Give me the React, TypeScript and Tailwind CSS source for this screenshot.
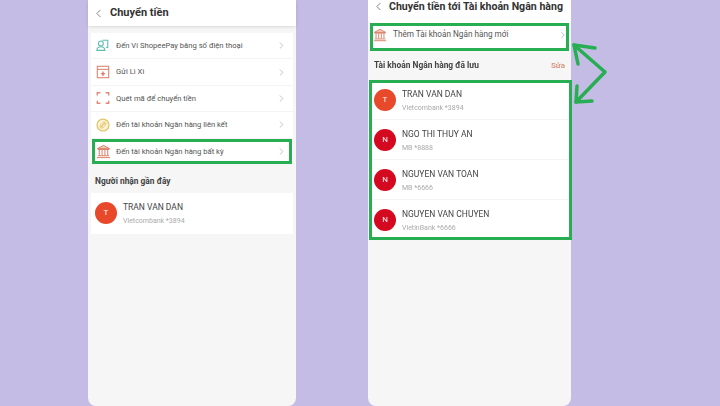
import React from "react";
import { ChevronLeft, ChevronRight } from "lucide-react";

const BankIcon = ({ className }: { className?: string }) => (
  <svg viewBox="0 0 16 16" className={className} fill="none" stroke="#d9775f" strokeWidth="1">
    <path d="M1.500 5 8 1.500 14.500 5z" fill="#f3c9bb" />
    <path d="M2 5.800h12M3.500 6v6M6.500 6v6M9.500 6v6M12.500 6v6M2 12.500h12M1 14.500h14" />
  </svg>
);

const PhoneUserIcon = () => (
  <svg viewBox="0 0 16 16" className="h-[13px] w-[13px]" fill="none" stroke="#5dbcae" strokeWidth="1.300">
    <circle cx="6" cy="5.500" r="3" />
    <path d="M1 14c.3-3 2-4.500 5-4.500s4.700 1.500 5 4.500z" />
    <path d="M8 1.500h6.500v9h-2" />
  </svg>
);

const EnvelopeIcon = () => (
  <svg viewBox="0 0 16 16" className="h-[14px] w-[14px]" fill="none" stroke="#df8a76" strokeWidth="1.300">
    <rect x="1.500" y="1.500" width="13" height="13" />
    <path d="M1.500 5h13" />
    <path d="M8 7.500v5M5.500 10h5" stroke="#d9664f" />
  </svg>
);

const ScanIcon = () => (
  <svg viewBox="0 0 16 16" className="h-[14px] w-[14px]" fill="none" stroke="#df8a76" strokeWidth="1.600">
    <path d="M1.500 5V2h3.500M11 2h3.500v3M1.500 11v3h3.500M11 14h3.500v-3" />
  </svg>
);

const LinkIcon = () => (
  <svg viewBox="0 0 16 16" className="h-[14px] w-[14px]" fill="#fbf3d6" stroke="#e3c56c" strokeWidth="1.500">
    <circle cx="8" cy="8" r="6.800" />
    <path d="m5.500 10.500 5-5" />
    <path d="M6.500 6 8 5a1.800 1.800 0 0 1 2.800 2.800L10 9.500M9.500 10 8 11a1.800 1.800 0 0 1-2.800-2.800L6 6.500" fill="none" strokeWidth="1" />
  </svg>
);

const menuItems = [
  { label: "Đến Ví ShopeePay bằng số điện thoại", icon: <PhoneUserIcon /> },
  { label: "Gửi Lì Xì", icon: <EnvelopeIcon /> },
  { label: "Quét mã để chuyển tiền", icon: <ScanIcon /> },
  { label: "Đến tài khoản Ngân hàng liên kết", icon: <LinkIcon /> },
  { label: "Đến tài khoản Ngân hàng bất kỳ", icon: <BankIcon className="h-[15px] w-[15px]" /> },
];

const accounts = [
  { letter: "T", name: "TRAN VAN DAN", bank: "Vietcombank *3894", red: false },
  { letter: "N", name: "NGO THI THUY AN", bank: "MB *8888", red: true },
  { letter: "N", name: "NGUYEN VAN TOAN", bank: "MB *6666", red: true },
  { letter: "N", name: "NGUYEN VAN CHUYEN", bank: "VietinBank *6666", red: true },
];

const Avatar = ({ letter, red }: { letter: string; red: boolean }) => (
  <div
    className={`flex h-[22px] w-[22px] shrink-0 items-center justify-center rounded-full text-[8px] font-normal text-white ${
      red ? "bg-[#d4081f]" : "bg-[#e8492a]"
    }`}
  >
    {letter}
  </div>
);

const AccountInfo = ({ name, bank }: { name: string; bank: string }) => (
  <div className="flex flex-col gap-[5px] pt-[2px]">
    <span className="text-[8.500px] leading-[10px] text-[#444]">{name}</span>
    <span className="text-[7px] leading-[9px] text-[#aaa]">{bank}</span>
  </div>
);

const LeftPhone = () => (
  <div className="relative h-[406px] w-[208px] shrink-0 rounded-b-lg bg-[#f6f6f6]">
    <div className="flex h-[26px] items-center gap-[5px] bg-white pl-[4px] shadow-[0_1px_3px_rgba(0,0,0,0.12)]">
      <ChevronLeft className="h-[13px] w-[13px] text-[#666]" strokeWidth={1.500} />
      <span className="text-[11px] font-bold text-[#333]">Chuyển tiền</span>
    </div>
    <div className="mx-[3px] mt-[7px] flex flex-col bg-white">
      {menuItems.map((item) => (
        <div key={item.label} className="flex h-[26.400px] items-center border-b border-[#f4f4f4] pl-[5px] pr-[6px]">
          <div className="flex w-[20px] items-center">{item.icon}</div>
          <span className="flex-1 text-[7.650px] text-[#555]">{item.label}</span>
          <ChevronRight className="h-[11px] w-[11px] text-[#aaa]" strokeWidth={1.500} />
        </div>
      ))}
    </div>
    <div className="px-[7px] pb-[6px] pt-[11px] text-[8.400px] font-bold leading-[11px] text-[#444]">Người nhận gần đây</div>
    <div className="mx-[3px] flex h-[41px] items-center gap-[6px] bg-white pl-[4px]">
      <Avatar letter="T" red={false} />
      <AccountInfo name="TRAN VAN DAN" bank="Vietcombank *3894" />
    </div>
    <div className="absolute left-[4px] top-[139px] h-[25px] w-[200px] border-[3px] border-[#27ae52]" />
  </div>
);

const RightPhone = () => (
  <div className="h-[406px] w-[203px] shrink-0 rounded-b-lg bg-[#f6f6f6]">
    <div className="flex h-[23px] items-start gap-[4px] bg-white pl-[4px]">
      <ChevronLeft className="h-[13px] w-[13px] shrink-0 text-[#666]" strokeWidth={1.500} />
      <span className="whitespace-nowrap text-[10.600px] font-bold leading-[13px] text-[#333]">
        Chuyển tiền tới Tài khoản Ngân hàng
      </span>
    </div>
    <div className="mx-[2px] flex h-[28px] items-center border-[3px] border-[#27ae52] bg-white pb-[5px]">
      <BankIcon className="h-[14px] w-[14px] shrink-0" />
      <span className="ml-[6px] flex-1 text-[8.200px] text-[#555]">Thêm Tài khoản Ngân hàng mới</span>
      <ChevronRight className="mr-[-2px] h-[10px] w-[10px] text-[#999]" strokeWidth={1.500} />
    </div>
    <div className="flex h-[29px] items-center justify-between pl-[6px] pr-[6px]">
      <span className="text-[8.400px] font-bold text-[#444]">Tài khoản Ngân hàng đã lưu</span>
      <span className="text-[8px] font-bold text-[#d9947f]">Sửa</span>
    </div>
    <div className="ml-[1px] mr-[-1px] flex h-[160px] flex-col border-[3px] border-[#27ae52] bg-white">
      {accounts.map((a) => (
        <div
          key={a.name}
          className="flex h-[40px] items-center gap-[6px] border-b border-[#f4f4f4] pl-[2px] first:h-[37px] first:pb-[2px] last:h-[37px] last:border-b-0 last:pt-[3px]"
        >
          <Avatar letter={a.letter} red={a.red} />
          <AccountInfo name={a.name} bank={a.bank} />
        </div>
      ))}
    </div>
  </div>
);

export default function App() {
  return (
    <div className="h-[406px] w-[720px] overflow-hidden bg-[#c5bce6]">
      <div
        className="relative flex h-[406px] w-[720px] gap-[72px] pl-[88px] antialiased blur-[0.4px]"
        style={{ fontFamily: '"Roboto", "Liberation Sans", sans-serif' }}
      >
        <LeftPhone />
        <RightPhone />
        <svg
          viewBox="0 0 720 406"
          className="pointer-events-none absolute inset-0 h-[406px] w-[720px]"
          fill="none"
          stroke="#27ae52"
          strokeWidth="3.500"
          strokeLinecap="round"
          strokeLinejoin="round"
        >
          <path d="M574 45 605 72 576 102" />
          <path d="M578 64 574 45 595 48" />
          <path d="M577 86 576 102 592 101" />
        </svg>
      </div>
    </div>
  );
}
